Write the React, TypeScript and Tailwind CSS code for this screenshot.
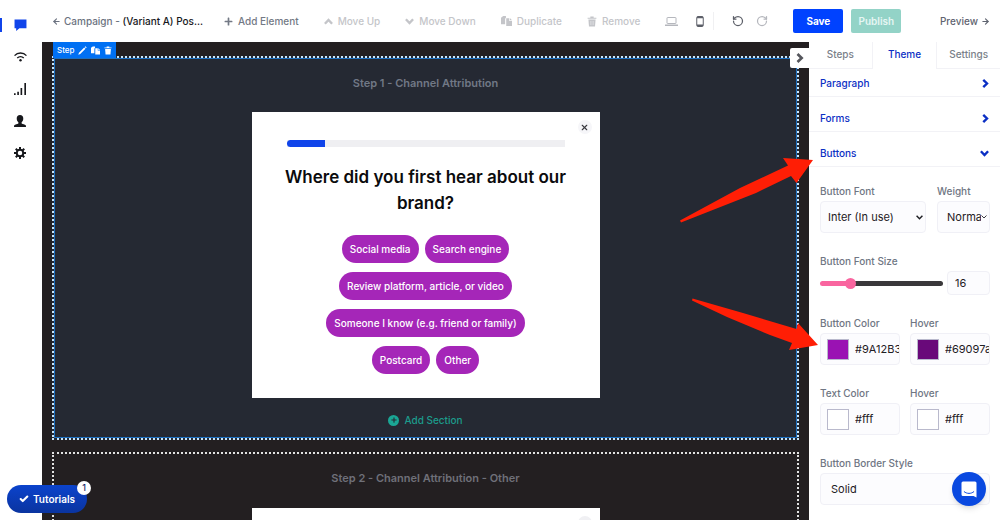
import { useState, type ReactNode } from 'react';
import { ArrowLeft, ArrowRight, Check, RotateCcw, RotateCw, X } from 'lucide-react';
import { FaPlus } from 'react-icons/fa';

const ChevronRight = ({ className }: { className?: string }) => (
  <svg viewBox="0 0 9 12" className={className} fill="none" stroke="currentColor" strokeWidth="3.2" aria-hidden="true">
    <path d="M1.500 1.200L6.500 6L1.500 10.800" />
  </svg>
);

const ChevronDown = ({ className }: { className?: string }) => (
  <svg viewBox="0 0 12 9" className={className} fill="none" stroke="currentColor" strokeWidth="3.2" aria-hidden="true">
    <path d="M1.200 1.500L6 6.500L10.800 1.500" />
  </svg>
);

const ChevronUp = ({ className }: { className?: string }) => (
  <svg viewBox="0 0 12 9" className={className} fill="none" stroke="currentColor" strokeWidth="3.2" aria-hidden="true">
    <path d="M1.200 7.500L6 2.500L10.800 7.500" />
  </svg>
);

const CopyIcon = ({ className }: { className?: string }) => (
  <svg viewBox="0 0 20 18" className={className} fill="currentColor" aria-hidden="true">
    <path d="M0 3l4-3h5v3L7.500 5v10H0z" />
    <path d="M9.500 4H15v5h5v9H9.500z" />
    <path d="M16.200 3.500L20 7.700h-3.800z" />
  </svg>
);

const TrashIcon = ({ className }: { className?: string }) => (
  <svg viewBox="0 0 18 20" className={className} aria-hidden="true">
    <path d="M1 3h5V1h6v2h5v2H1z" fill="currentColor" />
    <path d="M2.500 6.500h13L14.500 19h-11z" fill="currentColor" />
    <path d="M6.500 9v7.500M9 9v7.500M11.500 9v7.500" stroke="white" strokeWidth="1" opacity="0.6" />
  </svg>
);

const PencilIcon = ({ className }: { className?: string }) => (
  <svg viewBox="0 0 16 16" className={className} fill="currentColor" aria-hidden="true">
    <path d="M.5 15.500l1.200-3.500L11 2.700l2.300 2.300L4 14.300zM12 1.800L13.200.6l2.200 2.200L14.200 4z" />
  </svg>
);

const navItems = [
  {
    label: 'Campaigns',
    active: true,
    icon: (
      <svg viewBox="0 0 24 22" className="h-[12px] w-[13px]" fill="currentColor">
        <path d="M1 1h22v16H10l-6 5v-5H1z" />
      </svg>
    ),
  },
  {
    label: 'Channels',
    icon: (
      <svg viewBox="0 0 24 18" className="h-[10px] w-[13px]" fill="none" stroke="currentColor" strokeWidth="2.600">
        <path d="M1 6.500C7 0 17 0 23 6.500" />
        <path d="M6 11c3.500-3.500 8.500-3.500 12 0" />
        <circle cx="12" cy="15" r="2.200" fill="currentColor" stroke="none" />
      </svg>
    ),
  },
  {
    label: 'Analytics',
    icon: (
      <svg viewBox="0 0 22 22" className="h-[12px] w-[12px]" fill="currentColor">
        <path d="M0 19h3v3H0zM6 16h3v6H6zM12 9h3v13h-3zM19 0h3v22h-3z" />
      </svg>
    ),
  },
  {
    label: 'Audience',
    icon: (
      <svg viewBox="0 0 22 22" className="h-[12px] w-[12px]" fill="currentColor">
        <path d="M11 0c4 0 6 2.500 6 6.500 0 3-1.200 5.500-3 7v2c2 1.200 6 1.800 7.500 3.500.4.600.5 2 .5 3H0c0-1 .1-2.400.5-3C2 17.300 6 16.700 8 15.500v-2c-1.800-1.500-3-4-3-7C5 2.500 7 0 11 0z" />
      </svg>
    ),
  },
  {
    label: 'Settings',
    icon: (
      <svg viewBox="0 0 24 24" className="h-[12px] w-[12px]" fill="none" stroke="currentColor">
        <circle cx="12" cy="12" r="6.500" strokeWidth="4" />
        <path d="M12 0v5M12 19v5M0 12h5M19 12h5M3.500 3.500L7 7M17 17l3.500 3.500M20.500 3.500L17 7M7 17l-3.500 3.500" strokeWidth="4" />
      </svg>
    ),
  },
];

const answerRows = [
  ['Social media', 'Search engine'],
  ['Review platform, article, or video'],
  ['Someone I know (e.g. friend or family)'],
  ['Postcard', 'Other'],
];

const fieldBox = 'h-8 rounded-sm border border-[#f0f0f6] bg-[#fcfcfe]';

const Field = ({ label, id, className, children }: { label: string; id: string; className?: string; children: ReactNode }) => (
  <div className={`flex min-w-0 flex-col gap-0.5 ${className ?? ''}`}>
    <label htmlFor={id} className="text-[10px] leading-4 font-medium whitespace-nowrap text-[#6f7683]">
      {label}
    </label>
    {children}
  </div>
);

const ColorField = ({ label, id, initial }: { label: string; id: string; initial: string }) => {
  const [color, setColor] = useState(initial);
  const full = color.length === 4 ? color.replace(/[0-9a-f]/gi, '$&$&') : color;

  return (
    <Field label={label} id={id} className="flex-1">
      <div className={`flex items-center gap-1.5 pl-1.5 ${fieldBox}`}>
        <input
          type="color"
          aria-label={`${label} swatch`}
          value={full.toLowerCase()}
          onChange={(e) => setColor(e.target.value)}
          className="h-[21px] w-[22px] shrink-0 appearance-none border border-[#b9b9cc] bg-transparent p-0 [&::-webkit-color-swatch]:border-0 [&::-webkit-color-swatch-wrapper]:p-0"
        />
        <input
          id={id}
          type="text"
          value={color}
          onChange={(e) => setColor(e.target.value)}
          className="w-full min-w-0 bg-transparent text-[11px] text-[#1f2024] outline-none"
        />
      </div>
    </Field>
  );
};

const ToolButton = ({ icon, label, muted }: { icon: ReactNode; label: string; muted?: boolean }) => (
  <button
    type="button"
    className={`flex items-center gap-[5px] text-[10px] font-medium whitespace-nowrap ${muted ? 'text-[#c4c5c9]' : 'text-[#737985]'}`}
  >
    {icon}
    {label}
  </button>
);

const Toolbar = () => (
  <header className="flex h-[42px] shrink-0 items-center bg-white pr-2.5 pl-[10px]">
    <a href="#campaigns" className="flex w-[148px] items-center gap-[3px] text-[10px] font-medium whitespace-nowrap text-[#6b7280]">
      <ArrowLeft className="h-[9px] w-[9px] shrink-0" strokeWidth={3} />
      <span>
        Campaign - <span className="text-[#17181c]">(Variant A) Pos...</span>
      </span>
    </a>
    <div className="ml-6 flex items-center gap-[25px]">
      <ToolButton icon={<FaPlus className="h-[9px] w-[9px]" />} label="Add Element" />
      <ToolButton muted icon={<ChevronUp className="h-[7px] w-[9px]" />} label="Move Up" />
      <ToolButton muted icon={<ChevronDown className="h-[7px] w-[9px]" />} label="Move Down" />
      <ToolButton muted icon={<CopyIcon className="h-[10px] w-[11px]" />} label="Duplicate" />
      <ToolButton muted icon={<TrashIcon className="h-[11px] w-[10px]" />} label="Remove" />
    </div>
    <div className="ml-[25px] flex items-center">
      <button type="button" aria-label="Desktop view" className="text-[#b5b7bd]">
        <svg viewBox="0 0 26 18" className="h-[9px] w-[13px]" fill="none" stroke="currentColor" strokeWidth="2">
          <rect x="4" y="1" width="18" height="12" rx="1" />
          <path d="M0 16.500h26" strokeWidth="3" />
        </svg>
      </button>
      <button type="button" aria-label="Mobile view" className="ml-[18px] text-[#5c5f68]">
        <svg viewBox="0 0 16 22" className="h-[11px] w-[8px]" fill="none" stroke="currentColor" strokeWidth="2">
          <rect x="1.500" y="1" width="13" height="20" rx="2" />
          <path d="M2 3h12M2 18.500h12" strokeWidth="3" />
        </svg>
      </button>
      <span className="ml-[9px] h-[18px] w-px bg-[#f0f0f2]" />
      <button type="button" aria-label="Undo" className="ml-[18px] text-[#5c5f68]">
        <RotateCcw className="h-[12px] w-[12px]" strokeWidth={2.5} />
      </button>
      <button type="button" aria-label="Redo" className="ml-[12px] text-[#b5b7bd]">
        <RotateCw className="h-[12px] w-[12px]" strokeWidth={2.5} />
      </button>
    </div>
    <div className="ml-[25px] flex items-center gap-2">
      <button type="button" className="h-6 w-[50px] rounded-xs bg-[#0042ff] text-[10px] font-bold text-white">
        Save
      </button>
      <button type="button" className="h-6 w-[50px] rounded-xs bg-[#93d3c7] text-[10px] font-semibold text-[#e6f6f3]">
        Publish
      </button>
    </div>
    <a href="#preview" className="ml-auto flex items-center gap-[3px] text-[10px] font-medium text-[#5f6470]">
      Preview
      <ArrowRight className="h-[9px] w-[9px]" strokeWidth={3} />
    </a>
  </header>
);

const StepOne = () => (
  <section className="relative flex flex-col items-center border-2 border-dotted border-[#c9e6fa] bg-[#252933] pt-[15px] pb-2 outline outline-[#1c6fc0] -outline-offset-3">
    <div className="absolute -top-4 -left-px flex h-4 items-center gap-1 bg-[#0070f3] px-1 text-[8px] font-medium text-white">
      Step
      <button type="button" aria-label="Edit step">
        <PencilIcon className="h-[9px] w-[9px]" />
      </button>
      <button type="button" aria-label="Duplicate step">
        <CopyIcon className="h-[9px] w-[9px]" />
      </button>
      <button type="button" aria-label="Delete step">
        <TrashIcon className="h-[9px] w-[8px]" />
      </button>
    </div>

    <h2 className="text-[11px] leading-5 font-semibold text-[#717886]">Step 1 - Channel Attribution</h2>

    <div className="relative mt-[19px] flex w-[348px] max-w-full flex-col items-center bg-white pt-7 pb-6">
      <button
        type="button"
        aria-label="Close"
        className="absolute top-2 right-2 flex h-[14px] w-[14px] items-center justify-center rounded-full bg-[#f6f6f9] text-[#3a3a40]"
      >
        <X className="h-[9px] w-[9px]" strokeWidth={3} />
      </button>
      <div className="h-[7px] w-[278px] bg-[#efeff2]">
        <div className="h-full w-[14%] rounded-l-full bg-[#1044ea]" />
      </div>
      <h1 className="mt-[17px] w-[290px] text-center text-[17px] leading-[26px] font-semibold text-[#0b0b0d]">
        Where did you first hear about our brand?
      </h1>
      <div className="mt-[19px] flex flex-col items-center gap-[9px]">
        {answerRows.map((row) => (
          <div key={row[0]} className="flex gap-1.5">
            {row.map((answer) => (
              <button
                key={answer}
                type="button"
                className="h-7 rounded-full bg-[#a526b8] px-2 text-[10px] font-medium whitespace-nowrap text-white hover:bg-[#69097a]"
              >
                {answer}
              </button>
            ))}
          </div>
        ))}
      </div>
    </div>

    <button type="button" className="mt-3 flex items-center gap-[5px] text-[10px] leading-5 font-medium text-[#1c9c8c]">
      <span className="flex h-[11px] w-[11px] items-center justify-center rounded-full bg-[#1aa695] text-[#252933]">
        <FaPlus className="h-[6px] w-[6px]" />
      </span>
      Add Section
    </button>
  </section>
);

const StepTwo = () => (
  <section className="flex flex-1 flex-col items-center border-2 border-b-0 border-dotted border-[#e2e2e2] pt-[14px]">
    <h2 className="text-[11px] leading-5 font-semibold text-[#6f7079]">Step 2 - Channel Attribution - Other</h2>
    <div className="relative mt-5 h-20 w-[348px] max-w-full shrink-0 bg-white">
      <button
        type="button"
        aria-label="Close"
        className="absolute top-2 right-2 h-[14px] w-[14px] rounded-full bg-[#f0f0f3]"
      />
    </div>
  </section>
);

const accordion = [
  { label: 'Paragraph', height: 'h-7' },
  { label: 'Forms', height: 'h-[35px]' },
  { label: 'Buttons', height: 'h-[35px]', open: true },
];

const ThemePanel = () => {
  const [size, setSize] = useState(16);

  return (
    <aside className="flex w-[191px] shrink-0 flex-col bg-white">
      <div className="grid h-[27px] shrink-0 grid-cols-3 text-[10px] font-medium text-[#7a7f89]">
        <button type="button" className="border-r border-b border-[#f2f2f6] pb-0.5">Steps</button>
        <button type="button" className="pb-0.5 text-[#0b2fc4]">Theme</button>
        <button type="button" className="border-b border-l border-[#f2f2f6] pb-0.5">Settings</button>
      </div>

      {accordion.map((item) => (
        <button
          key={item.label}
          type="button"
          aria-expanded={!!item.open}
          className={`flex shrink-0 items-end justify-between border-b border-[#f2f2f6] pr-[11px] pb-[5px] pl-[11px] text-[10px] leading-4 font-medium text-[#0b2fc4] ${item.height}`}
        >
          {item.label}
          <span className="flex h-4 items-center">
            {item.open ? <ChevronDown className="h-[7px] w-[9px]" /> : <ChevronRight className="h-[9px] w-[7px]" />}
          </span>
        </button>
      ))}

      <div className="flex flex-col gap-5 px-[10px] pt-4 pl-[11px]">
        <div className="flex gap-[11px]">
          <Field label="Button Font" id="button-font" className="flex-1">
            <div className="relative">
              <select id="button-font" className={`w-full appearance-none pr-4 pl-[7px] text-[11px] text-[#1f2024] ${fieldBox}`}>
                <option>Inter (In use)</option>
                <option>Roboto</option>
              </select>
              <svg viewBox="0 0 12 8" className="pointer-events-none absolute top-[14px] right-[3px] h-[5px] w-[7px]" fill="none" stroke="#1f2024" strokeWidth="2.500">
                <path d="M1 1l5 5 5-5" />
              </svg>
            </div>
          </Field>
          <Field label="Weight" id="font-weight" className="w-[53px]">
            <div className="relative">
              <select id="font-weight" className={`w-full appearance-none overflow-hidden pr-2 pl-[9px] text-[11px] text-[#1f2024] ${fieldBox}`}>
                <option>Normal</option>
                <option>Bold</option>
              </select>
              <svg viewBox="0 0 12 8" className="pointer-events-none absolute top-[14px] right-[3px] h-[4px] w-[6px]" fill="none" stroke="#3a3a40" strokeWidth="2">
                <path d="M1 1l5 5 5-5" />
              </svg>
            </div>
          </Field>
        </div>

        <Field label="Button Font Size" id="font-size">
          <div className="flex items-center gap-1">
            <input
              id="font-size"
              type="range"
              min={8}
              max={44}
              value={size}
              onChange={(e) => setSize(Number(e.target.value))}
              className="h-[5px] min-w-0 flex-1 appearance-none rounded-full bg-[linear-gradient(to_right,#f9659f_24%,#3a383b_24%)] [&::-webkit-slider-thumb]:h-[11px] [&::-webkit-slider-thumb]:w-[11px] [&::-webkit-slider-thumb]:appearance-none [&::-webkit-slider-thumb]:rounded-full [&::-webkit-slider-thumb]:bg-[#f9659f]"
            />
            <input
              type="text"
              aria-label="Font size value"
              value={size}
              onChange={(e) => setSize(Number(e.target.value) || 0)}
              className="h-6 w-[43px] rounded-sm border border-[#f0f0f6] bg-[#fcfcfe] px-[7px] text-[11px] text-[#1f2024]"
            />
          </div>
        </Field>

        <div className="flex gap-[10px]">
          <ColorField label="Button Color" id="button-color" initial="#9A12B3" />
          <ColorField label="Hover" id="button-hover" initial="#69097a" />
        </div>
        <div className="flex gap-[10px]">
          <ColorField label="Text Color" id="text-color" initial="#fff" />
          <ColorField label="Hover" id="text-hover" initial="#fff" />
        </div>

        <Field label="Button Border Style" id="border-style">
          <select id="border-style" className={`w-full appearance-none px-2.5 text-[11px] text-[#1f2024] ${fieldBox}`}>
            <option>Solid</option>
            <option>Dashed</option>
          </select>
        </Field>
      </div>
    </aside>
  );
};

const App = () => {
  return (
    <div className="relative flex h-screen overflow-hidden bg-white font-['Inter',sans-serif]">
      <nav className="flex w-[42px] shrink-0 flex-col gap-[18px] pt-[18px]">
        {navItems.map((item) => (
          <a
            key={item.label}
            href={`#${item.label.toLowerCase()}`}
            aria-label={item.label}
            className={`flex h-[14px] items-center border-l-2 pl-3 ${item.active ? 'border-[#1044ea] text-[#1044ea]' : 'border-transparent text-[#17181c]'}`}
          >
            {item.icon}
          </a>
        ))}
      </nav>

      <div className="flex min-w-0 flex-1 flex-col">
        <Toolbar />
        <div className="relative flex min-h-0 flex-1">
          <main className="relative flex min-w-0 flex-1 flex-col gap-3 overflow-hidden bg-[#231f21] pt-[14px] pr-[10px] pl-[10px]">
            <StepOne />
            <StepTwo />
            <button
              type="button"
              aria-label="Collapse panel"
              className="absolute top-1.5 right-0 flex h-5 w-[19px] items-center justify-center rounded-l-xs bg-white text-[#55565c]"
            >
              <ChevronRight className="h-[10px] w-[8px]" />
            </button>
          </main>
          <ThemePanel />

          {/* Callout arrows */}
          <svg viewBox="0 0 140 196" className="pointer-events-none absolute top-[114px] right-[180px] h-[196px] w-[140px]" fill="#ff1e05" aria-hidden="true">
            <path d="M0 64.500L60 32L108 9.500L103 2L133 4L116.500 27L111 20L76 37L1 66.500z" />
            <path d="M12.500 142.500L63 157L116.500 173L118 167L138 189L109 194L112 187L90 179L47 161L12 144.500z" />
          </svg>
        </div>
      </div>

      <button
        type="button"
        className="absolute bottom-[7px] left-[7px] flex h-7 items-center gap-1 rounded-full bg-linear-to-b from-[#0b43cc] to-[#0a34a0] px-3 text-[10px] font-semibold text-white"
      >
        <Check className="h-[10px] w-[10px]" strokeWidth={5} />
        Tutorials
        <span className="absolute -top-1 -right-1 flex h-[14px] w-[14px] items-center justify-center rounded-full bg-white text-[9px] font-medium text-[#1a2a6c]">
          1
        </span>
      </button>

      <button
        type="button"
        aria-label="Open chat"
        className="absolute right-[14px] bottom-[14px] flex h-[34px] w-[34px] items-center justify-center rounded-full bg-[#0a49e0] shadow-md"
      >
        <svg viewBox="0 0 32 34" className="h-[17px] w-[16px]" aria-hidden="true">
          <path d="M4 1h24a3 3 0 013 3v29l-6-3H4a3 3 0 01-3-3V4a3 3 0 013-3z" fill="white" />
          <path d="M6.500 21.500c5.500 4.500 13.500 4.500 19 0" fill="none" stroke="#0a49e0" strokeWidth="2" strokeLinecap="round" />
        </svg>
      </button>
    </div>
  );
};

export default App;
